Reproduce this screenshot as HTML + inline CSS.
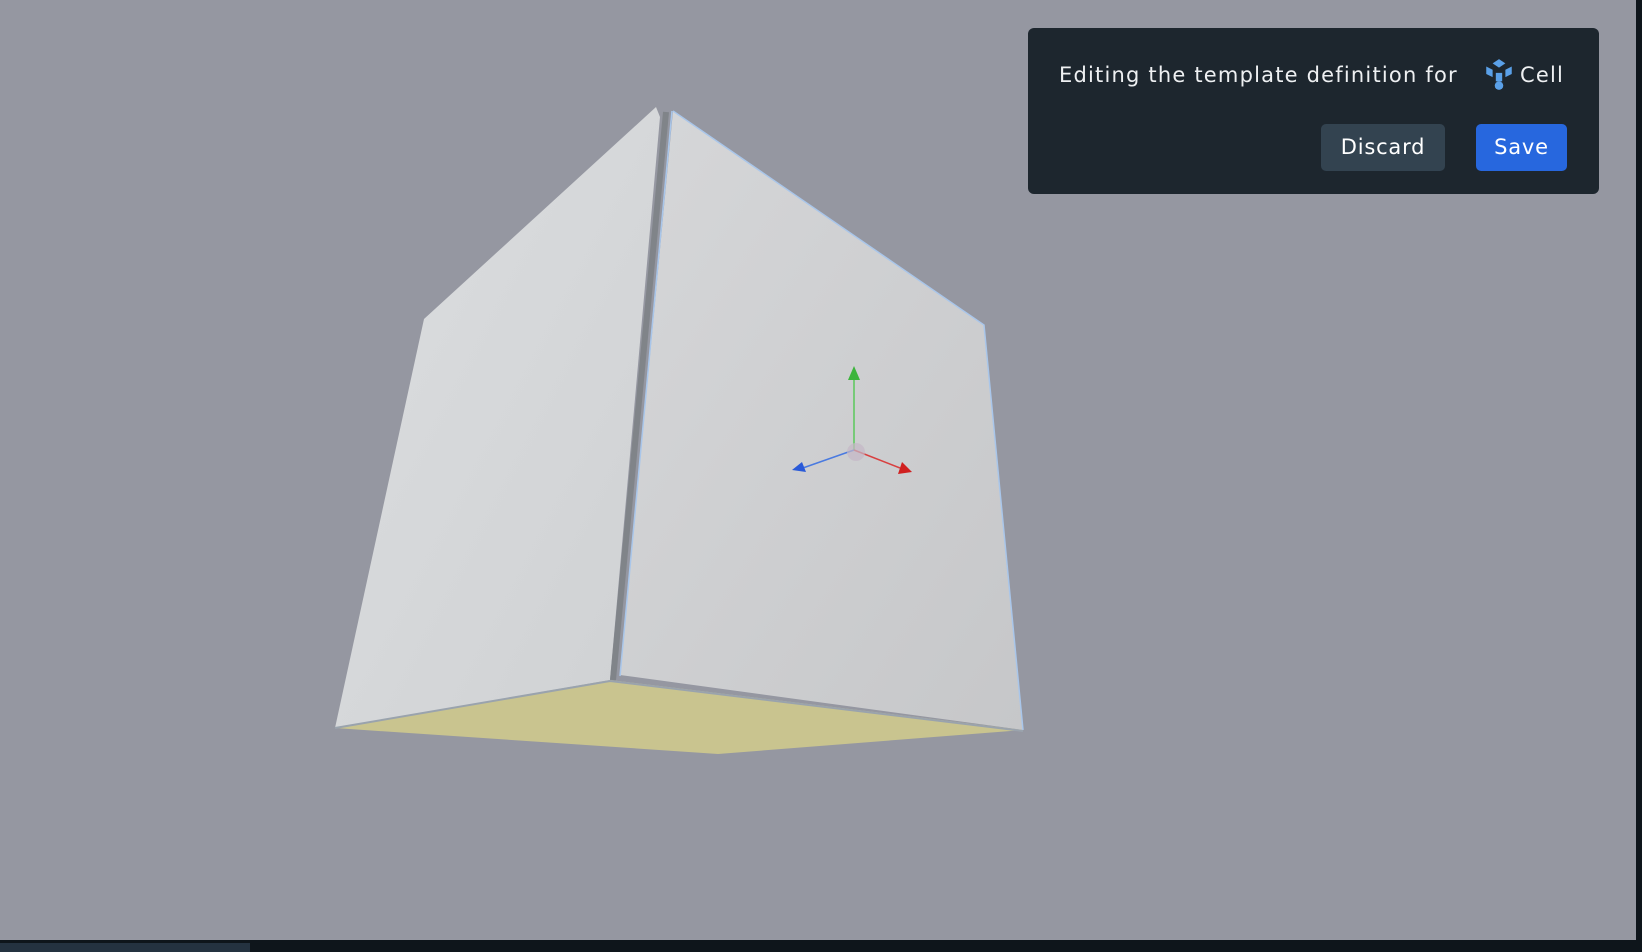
<!DOCTYPE html>
<html><head><meta charset="utf-8"><style>
html,body{margin:0;padding:0;width:1642px;height:952px;overflow:hidden;background:#9597a1;font-family:"DejaVu Sans","Liberation Sans",sans-serif}
.panel{position:absolute;left:1028px;top:28px;width:571px;height:166px;background:#1d262e;border-radius:6px}
.t{position:absolute;left:31px;top:35px;color:#eef0f2;font-size:21px;letter-spacing:1.2px;white-space:nowrap}
.btn{position:absolute;top:96px;height:47px;border-radius:5px;color:#fff;font-size:21px;letter-spacing:0.8px;line-height:47px;text-align:center}
</style></head><body>
<svg width="1642" height="952" style="position:absolute;left:0;top:0">
<defs>
<linearGradient id="gl" x1="0" y1="0" x2="1" y2="1"><stop offset="0" stop-color="#dcdee0"/><stop offset="1" stop-color="#cfd1d3"/></linearGradient>
<linearGradient id="gr" x1="0" y1="0" x2="1" y2="1"><stop offset="0" stop-color="#d6d7d9"/><stop offset="1" stop-color="#c6c7c9"/></linearGradient>
</defs>
<rect x="1636" y="0" width="6" height="952" fill="#0e151b"/>
<rect x="0" y="940" width="1642" height="12" fill="#0e151b"/>
<rect x="0" y="943" width="250" height="9" fill="#243240"/>
<polygon points="335,728 610,680 1023,730 718,754" fill="#c9c48f"/>
<polygon points="656,107 424,319 335,728 610,680 660,117" fill="url(#gl)"/>
<polygon points="673,111 984,325 1023,730 620,675" fill="url(#gr)"/>
<polyline points="666,112 613,680" stroke="#808489" stroke-width="6" fill="none"/>
<polyline points="672,111 620,676" stroke="#a9c6ea" stroke-width="1.5" fill="none"/>
<polyline points="673,111 984,325 1023,730" stroke="#a9c6ea" stroke-width="1.5" fill="none"/>
<polyline points="335,728 610,681 1023,731" stroke="#9aa3ad" stroke-width="2" fill="none"/>
<g>
<line x1="854" y1="450" x2="854" y2="378" stroke="#5ac85a" stroke-width="1.5"/>
<polygon points="854,366 848,380 860,380" fill="#3cb43c"/>
<line x1="854" y1="450" x2="800" y2="469" stroke="#4a7ae0" stroke-width="1.5"/>
<polygon points="792,470 802,462 806,472" fill="#2a5ad8"/>
<line x1="854" y1="450" x2="900" y2="468" stroke="#d84040" stroke-width="1.5"/>
<polygon points="912,472 902,462 898,474" fill="#d02020"/>
<circle cx="856" cy="452" r="9" fill="#c4b8c6" opacity=".7"/>
</g>
</svg>
<div class="panel">
<div class="t">Editing the template definition for</div>
<svg style="position:absolute;left:455px;top:30px" width="32" height="34" viewBox="0 0 30 32"><g fill="#5aa0e8"><polygon points="15,1 21,5 15,9 9,5"/><polygon points="3,8 9,11 9,18 3,15"/><polygon points="27,8 21,11 21,18 27,15"/><rect x="12" y="14" width="6" height="8"/><circle cx="15" cy="26" r="4"/></g></svg>
<div class="t" style="left:492px">Cell</div>
<div class="btn" style="left:293px;width:124px;background:#334350">Discard</div>
<div class="btn" style="left:448px;width:91px;background:#2767de">Save</div>
</div>
</body></html>
